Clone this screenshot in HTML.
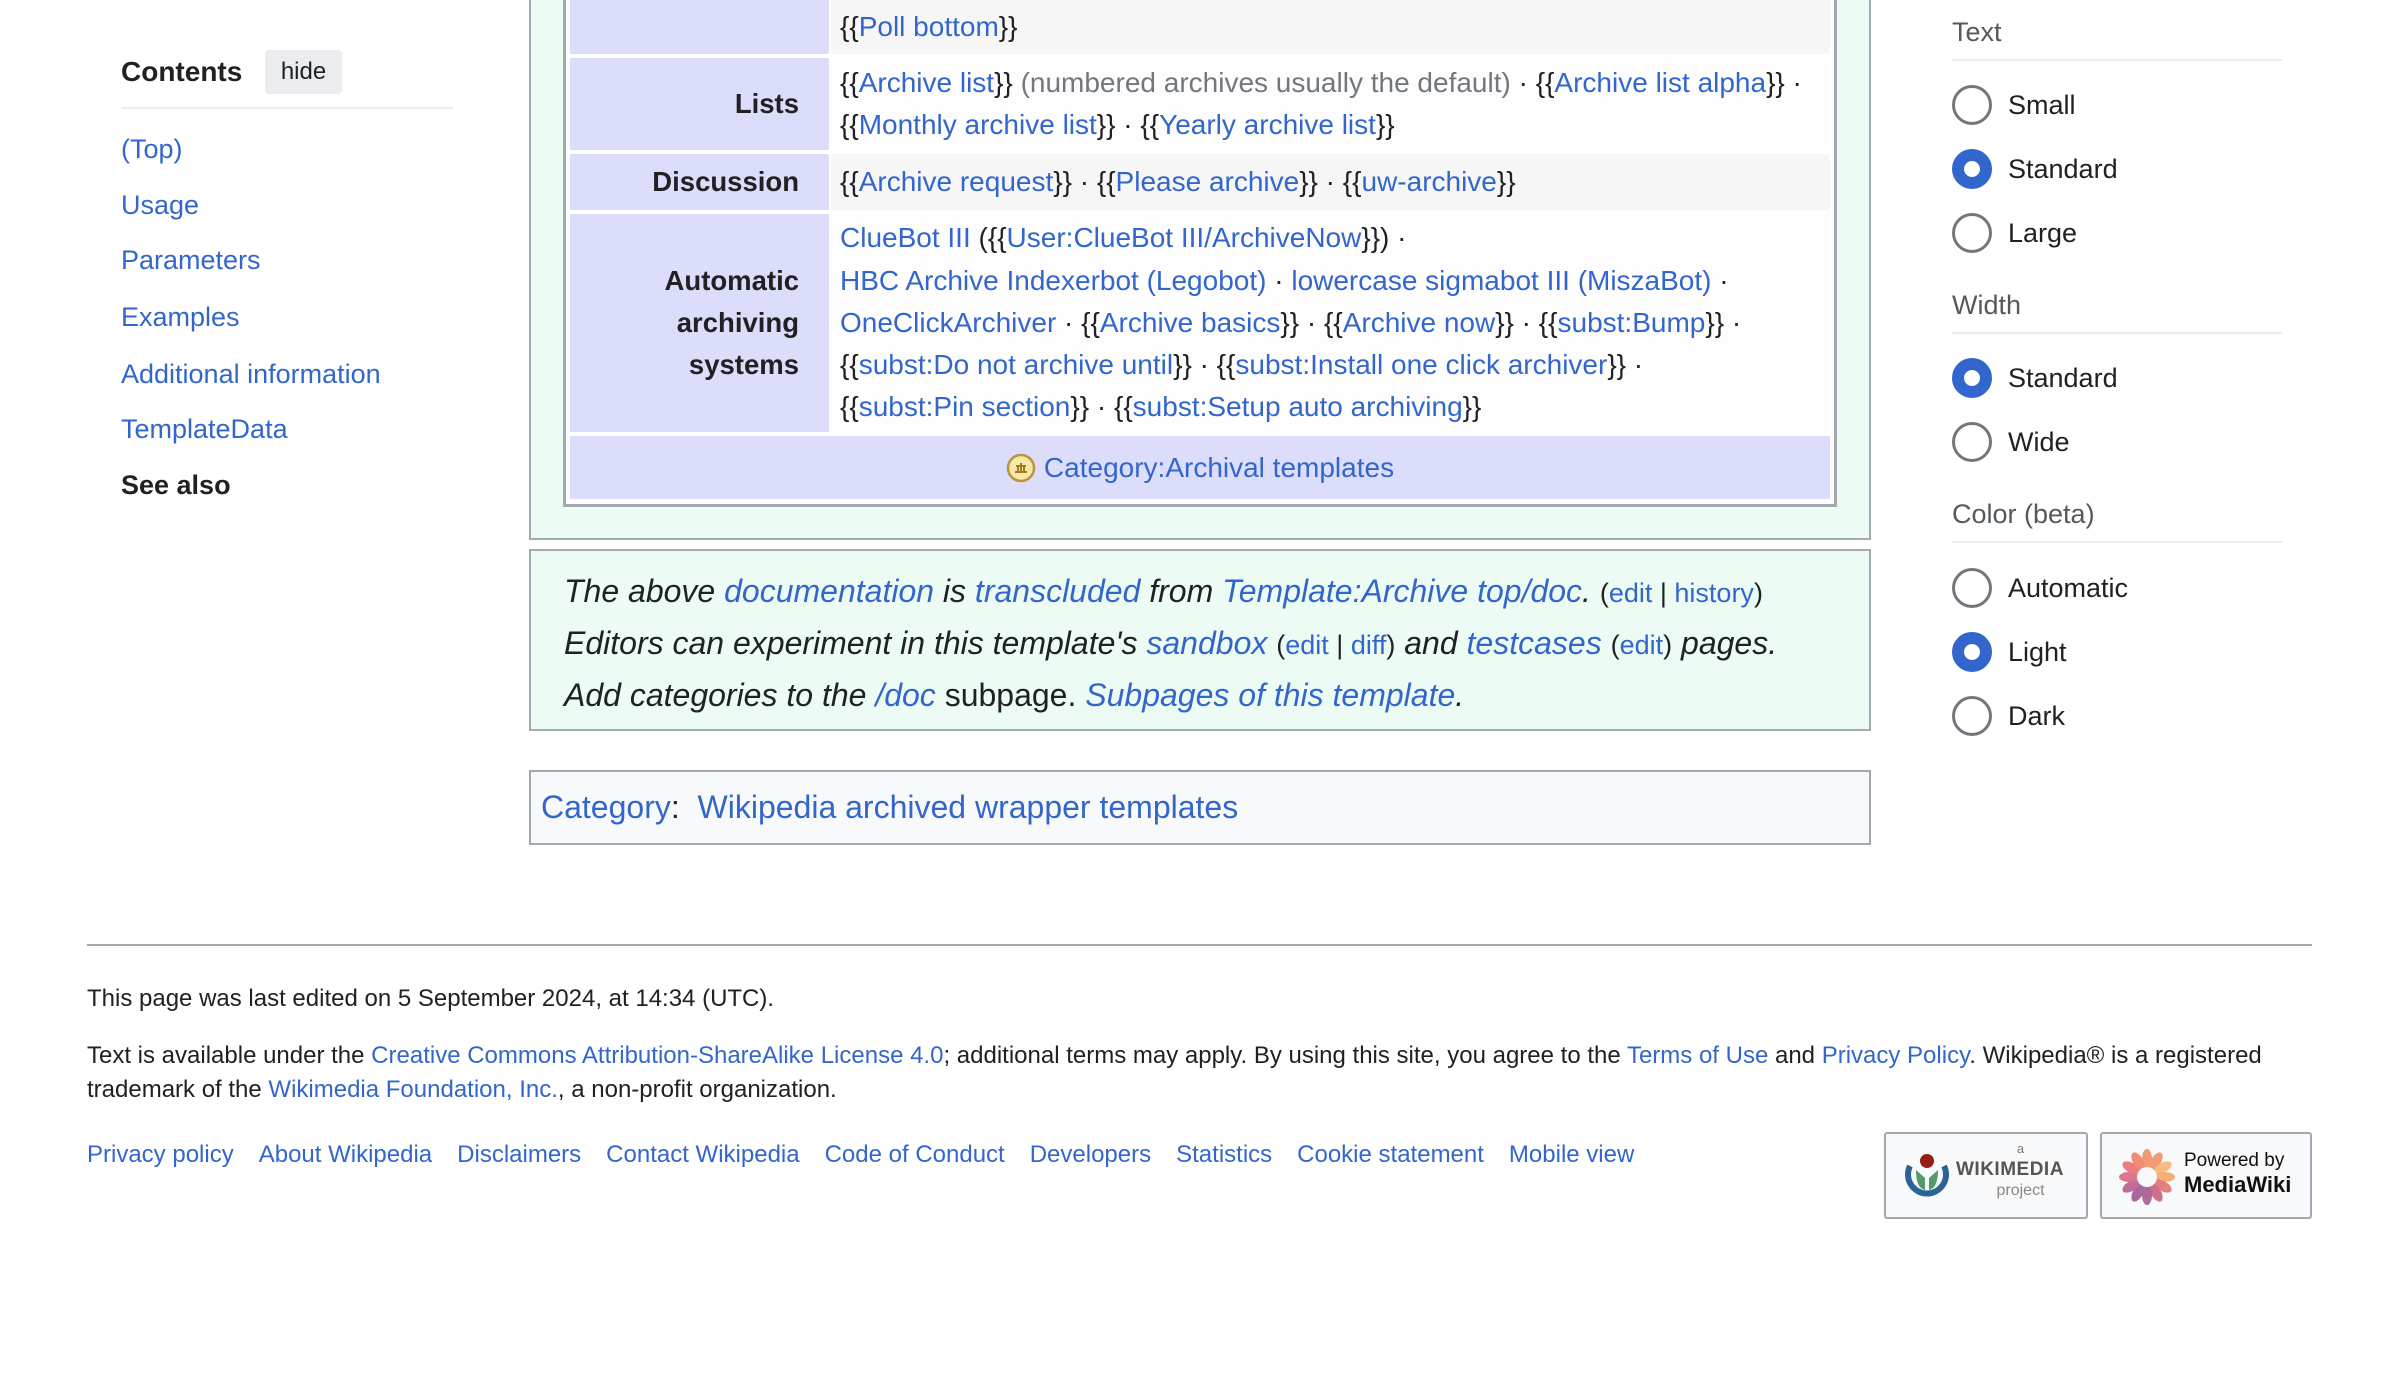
<!DOCTYPE html>
<html><head><meta charset="utf-8"><style>
*{margin:0;padding:0;box-sizing:border-box}
body{width:2400px;height:1398px;background:#fff;font-family:"Liberation Sans",Arial,sans-serif;color:#202122;position:relative;overflow:hidden}
a{color:#3366cc;text-decoration:none}
.abs{position:absolute}
.toc a{position:absolute;left:121px;font-size:27px;color:#3366cc;line-height:34px}
.lab{position:absolute;left:570px;width:259px;background:#dcdcfb;font-weight:bold;font-size:27.5px;text-align:right;padding-right:30px;display:flex;align-items:center;justify-content:flex-end;line-height:42px}
.cnt{position:absolute;left:831px;width:999px;font-size:28px;padding-left:9px;line-height:42.3px;display:flex;flex-direction:column;justify-content:center;white-space:nowrap}
.g{color:#72777d}
.radio{position:absolute;left:1952px;width:40px;height:40px;border-radius:50%;border:3px solid #72777d;background:#fff}
.radio.on{border:12px solid #3366cc}
.rl{position:absolute;left:2008px;font-size:27px;line-height:34px;color:#202122}
.hd{position:absolute;left:1952px;font-size:27px;color:#54595d;line-height:34px}
.hl{position:absolute;left:1952px;width:330px;height:2px;background:#eaecf0}
.ft{position:absolute;left:87px;font-size:24px;line-height:34px}
.fl a{margin-right:25px}
.sm{font-style:normal;font-size:27px}
</style></head><body>

<div class="abs" style="left:121px;top:55px;font-size:28px;font-weight:bold;line-height:34px">Contents</div>
<div class="abs" style="left:265px;top:50px;width:77px;height:44px;background:#eaecf0;border-radius:4px;font-size:24px;line-height:44px;text-align:center">hide</div>
<div class="abs" style="left:121px;top:107px;width:332px;height:2px;background:#eaecf0"></div>
<div class="toc">
<a style="top:132px">(Top)</a>
<a style="top:188px">Usage</a>
<a style="top:243px">Parameters</a>
<a style="top:300px">Examples</a>
<a style="top:357px">Additional information</a>
<a style="top:412px">TemplateData</a>
<a style="top:468px;color:#202122;font-weight:bold">See also</a>
</div>

<div class="abs" style="left:529px;top:-4px;width:1342px;height:544px;background:#ecfcf4;border:2px solid #a2a9b1"></div>
<div class="abs" style="left:563px;top:-4px;width:1274px;height:511px;background:#fff;border:3px solid #a2a9b1"></div>

<div class="lab" style="top:-4px;height:58px"></div>
<div class="cnt" style="top:-4px;height:58px;background:#f6f6f6;justify-content:flex-end;padding-bottom:6px"><div>{{<a>Poll bottom</a>}}</div></div>

<div class="lab" style="top:58px;height:92px">Lists</div>
<div class="cnt" style="top:58px;height:92px;background:#fdfdfd"><div>{{<a>Archive list</a>}} <span class="g">(numbered archives usually the default)</span> · {{<a>Archive list alpha</a>}} ·</div><div>{{<a>Monthly archive list</a>}} · {{<a>Yearly archive list</a>}}</div></div>

<div class="lab" style="top:154px;height:56px">Discussion</div>
<div class="cnt" style="top:154px;height:56px;background:#f6f6f6"><div>{{<a>Archive request</a>}} · {{<a>Please archive</a>}} · {{<a>uw-archive</a>}}</div></div>

<div class="lab" style="top:214px;height:218px"><div>Automatic<br>archiving<br>systems</div></div>
<div class="cnt" style="top:214px;height:218px;background:#fdfdfd">
<div><a>ClueBot III</a> ({{<a>User:ClueBot III/ArchiveNow</a>}}) ·</div>
<div><a>HBC Archive Indexerbot (Legobot)</a> · <a>lowercase sigmabot III (MiszaBot)</a> ·</div>
<div><a>OneClickArchiver</a> · {{<a>Archive basics</a>}} · {{<a>Archive now</a>}} · {{<a>subst:Bump</a>}} ·</div>
<div>{{<a>subst:Do not archive until</a>}} · {{<a>subst:Install one click archiver</a>}} ·</div>
<div>{{<a>subst:Pin section</a>}} · {{<a>subst:Setup auto archiving</a>}}</div>
</div>

<div class="abs" style="left:570px;top:436px;width:1260px;height:63px;background:#dcdcfb;font-size:28px;display:flex;align-items:center;justify-content:center">
<svg width="30" height="30" viewBox="0 0 30 30" style="margin-right:8px"><circle cx="15" cy="15" r="13" fill="#f6e9a8" stroke="#b8963a" stroke-width="2.5"/><path d="M9 19h12M12 19v-6M18 19v-6M15 19v-9M10 13h10" stroke="#a07b24" stroke-width="2" fill="none"/></svg>
<a>Category:Archival templates</a></div>

<div class="abs" style="left:529px;top:549px;width:1342px;height:182px;background:#ecfcf4;border:2px solid #a2a9b1;padding:15px 0 0 33px;font-size:32px;font-style:italic;line-height:50px;white-space:nowrap">
<div>The above <a>documentation</a> is <a>transcluded</a> from <a>Template:Archive top/doc</a>. <span class="sm">(<a>edit</a> | <a>history</a>)</span></div>
<div>Editors can experiment in this template's <a>sandbox</a> <span class="sm">(<a>edit</a> | <a>diff</a>)</span> and <a>testcases</a> <span class="sm">(<a>edit</a>)</span> pages.</div>
<div>Add categories to the <a>/doc</a> <span style="font-style:normal">subpage.</span> <a>Subpages of this template</a>.</div>
</div>

<div class="abs" style="left:529px;top:770px;width:1342px;height:75px;background:#f8f9fa;border:2px solid #a2a9b1;padding-left:10px;font-size:32px;line-height:71px"><a>Category</a>:&nbsp; <a>Wikipedia archived wrapper templates</a></div>

<div class="hd" style="top:15px">Text</div><div class="hl" style="top:59px"></div>
<div class="radio" style="top:85px"></div><div class="rl" style="top:88px">Small</div>
<div class="radio on" style="top:149px"></div><div class="rl" style="top:152px">Standard</div>
<div class="radio" style="top:213px"></div><div class="rl" style="top:216px">Large</div>
<div class="hd" style="top:288px">Width</div><div class="hl" style="top:332px"></div>
<div class="radio on" style="top:358px"></div><div class="rl" style="top:361px">Standard</div>
<div class="radio" style="top:422px"></div><div class="rl" style="top:425px">Wide</div>
<div class="hd" style="top:497px">Color (beta)</div><div class="hl" style="top:541px"></div>
<div class="radio" style="top:568px"></div><div class="rl" style="top:571px">Automatic</div>
<div class="radio on" style="top:632px"></div><div class="rl" style="top:635px">Light</div>
<div class="radio" style="top:696px"></div><div class="rl" style="top:699px">Dark</div>

<div class="abs" style="left:87px;top:944px;width:2225px;height:2px;background:#a2a9b1"></div>
<div class="ft" style="top:982px">This page was last edited on 5 September 2024, at 14:34 (UTC).</div>
<div class="ft" style="top:1039px;width:2230px">Text is available under the <a>Creative Commons Attribution-ShareAlike License 4.0</a>; additional terms may apply. By using this site, you agree to the <a>Terms of Use</a> and <a>Privacy Policy</a>. Wikipedia® is a registered trademark of the <a>Wikimedia Foundation, Inc.</a>, a non-profit organization.</div>
<div class="ft fl" style="top:1138px"><a>Privacy policy</a><a>About Wikipedia</a><a>Disclaimers</a><a>Contact Wikipedia</a><a>Code of Conduct</a><a>Developers</a><a>Statistics</a><a>Cookie statement</a><a>Mobile view</a></div>

<div class="abs" style="left:1884px;top:1132px;width:204px;height:87px;background:#f8f9fa;border:2px solid #a2a9b1;border-radius:3px">
<svg class="abs" style="left:18px;top:18px" width="46" height="46" viewBox="0 0 46 46"><path d="M6 14 A19 19 0 1 0 40 14" stroke="#2a6496" stroke-width="6" fill="none"/><path d="M12 18 Q12 36 21 38 L21 26 Z M34 18 Q34 36 25 38 L25 26 Z" fill="#559a6a"/><circle cx="23" cy="9" r="7" fill="#951d13"/></svg>
<div class="abs" style="left:77px;top:8px;width:115px;text-align:center;color:#777;font-size:13px;line-height:14px">a</div>
<div class="abs" style="left:70px;top:24px;font-weight:bold;color:#555;font-size:19px;letter-spacing:0.5px;line-height:24px">WIKIMEDIA</div>
<div class="abs" style="left:77px;top:48px;width:115px;text-align:center;color:#888;font-size:16px;line-height:18px">project</div>
</div>
<div class="abs" style="left:2100px;top:1132px;width:212px;height:87px;background:#f8f9fa;border:2px solid #a2a9b1;border-radius:3px">
<svg class="abs" style="left:16px;top:14px" width="58" height="58" viewBox="0 0 58 58"><g transform="translate(29 29)">
<g fill="#f08a5d" opacity="0.85"><ellipse rx="5" ry="10" cy="-18"/><ellipse rx="5" ry="10" cy="-18" transform="rotate(30)"/><ellipse rx="5" ry="10" cy="-18" transform="rotate(60)" fill="#f5b26b"/><ellipse rx="5" ry="10" cy="-18" transform="rotate(90)" fill="#f5a25d"/><ellipse rx="5" ry="10" cy="-18" transform="rotate(120)" fill="#e06a6a"/><ellipse rx="5" ry="10" cy="-18" transform="rotate(150)" fill="#c9577a"/><ellipse rx="5" ry="10" cy="-18" transform="rotate(180)" fill="#a24f8a"/><ellipse rx="5" ry="10" cy="-18" transform="rotate(210)" fill="#9a4f8f"/><ellipse rx="5" ry="10" cy="-18" transform="rotate(240)" fill="#b8558a"/><ellipse rx="5" ry="10" cy="-18" transform="rotate(270)" fill="#d9607a"/><ellipse rx="5" ry="10" cy="-18" transform="rotate(300)" fill="#e9686a"/><ellipse rx="5" ry="10" cy="-18" transform="rotate(330)" fill="#ef7a5d"/></g>
<circle r="10" fill="#f8f9fa"/></g></svg>
<div class="abs" style="left:82px;top:15px;font-size:19px;line-height:24px;color:#111">Powered by</div>
<div class="abs" style="left:82px;top:38px;font-size:22px;line-height:26px;color:#111;font-weight:bold">MediaWiki</div>
</div>
</body></html>
